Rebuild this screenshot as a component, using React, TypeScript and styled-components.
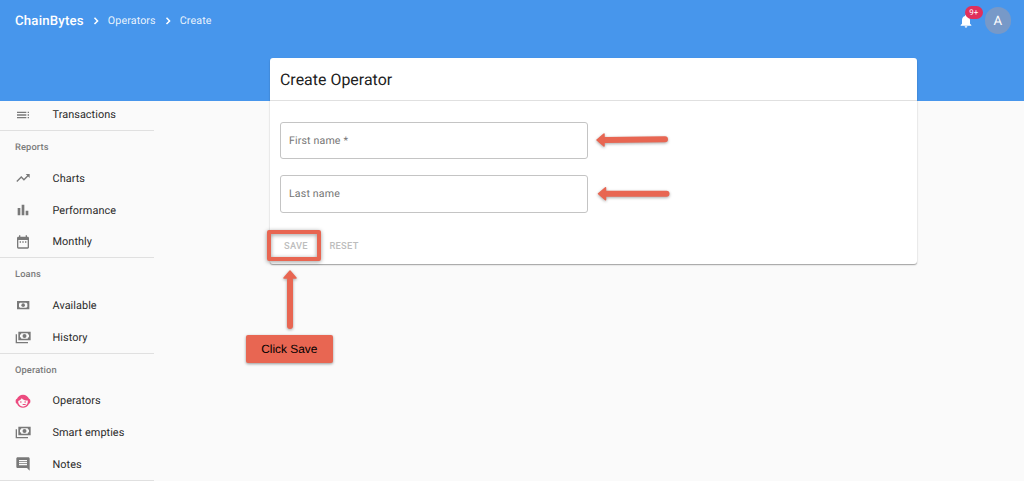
import React from "react";
import styled, { createGlobalStyle } from "styled-components";
import { MdToc, MdTrendingUp, MdBarChart, MdDateRange, MdComment, MdNotifications } from "react-icons/md";

const Global = createGlobalStyle`
  * { box-sizing: border-box; }
  body {
    margin: 0;
    background: #fafafa;
    font-family: Roboto, sans-serif;
    text-rendering: geometricPrecision;
    overflow: hidden;
  }
`;

const Page = styled.div`
  position: relative;
  height: 481px;
  display: grid;
  grid-template-rows: 58px 423px;
  background: linear-gradient(#4796ec 100.6px, #fafafa 100.6px);
`;

const Header = styled.header`
  height: 41px;
  display: flex;
  align-items: center;
  padding: 0 13px 0 15px;
  color: #fff;
`;

const Crumb = styled.span<{ $brand?: boolean }>`
  font-size: ${p => (p.$brand ? 13.2 : 10.7)}px;
  font-weight: ${p => (p.$brand ? 500 : 400)};
  letter-spacing: ${p => (p.$brand ? 0.2 : 0.12)}px;
  line-height: 16px;
  padding-top: ${p => (p.$brand ? 2.5 : 1)}px;
  color: ${p => (p.$brand ? "#fff" : "rgba(255,255,255,.9)")};
`;

const Separator = styled.svg`
  width: 16px;
  height: 16px;
  margin: 1px 4px 0;
  fill: none;
  stroke: #fff;
  stroke-width: 1.5;
`;

const Bell = styled.div`
  position: relative;
  display: flex;
  margin-left: auto;
  margin-right: 11px;
  svg { width: 16px; height: 16px; }
`;

const Badge = styled.span`
  position: absolute;
  left: 7.5px;
  top: -7px;
  width: 17.5px;
  height: 13.5px;
  border-radius: 7px;
  background: #e1305b;
  font-size: 8px;
  line-height: 13.5px;
  text-align: center;
`;

const Avatar = styled.div`
  width: 26.5px;
  height: 26.5px;
  border-radius: 50%;
  background: #7799c8;
  font-size: 13.2px;
  line-height: 29px;
  text-align: center;
`;

const Body = styled.div`
  display: flex;
  align-items: flex-start;
`;

const Sidebar = styled.nav`
  width: 154px;
  margin-top: 40.4px;
  margin-right: 115.5px;
`;

const Group = styled.section`
  border-bottom: 1px solid #e0e0e0;
  margin-bottom: -0.8px;
`;

const GroupTitle = styled.div`
  height: 31.8px;
  padding-left: 15px;
  font-size: 9.3px;
  font-weight: 500;
  letter-spacing: 0.12px;
  line-height: 35px;
  color: #7c7c7c;
`;

const NavItem = styled.div<{ $active?: boolean }>`
  height: 31.7px;
  display: flex;
  align-items: center;
  padding: 0.8px 0 0 15px;
  gap: 21.5px;
  font-size: 10.9px;
  letter-spacing: 0.05px;
  color: #2b2b2b;
  svg { width: 16px; height: 16px; color: ${p => (p.$active ? "#ec4b7f" : "#797979")}; }
`;

const Card = styled.main`
  width: 647.5px;
  height: 206px;
  border-radius: 3px;
  background: #fff;
  box-shadow: 0 1px 1px rgba(0,0,0,.25), 0 1px 2px rgba(0,0,0,.15);
`;

const CardTitle = styled.h1`
  margin: 0;
  height: 43px;
  padding-left: 10.5px;
  border-bottom: 1px solid #e0e0e0;
  font-size: 15.9px;
  font-weight: 400;
  letter-spacing: 0.03px;
  line-height: 43px;
  color: #212121;
`;

const Form = styled.form`
  padding: 21px 10.5px 0;
  display: flex;
  flex-direction: column;
  gap: 16.1px;
`;

const Field = styled.label`
  width: 308px;
  height: 37.3px;
  border: 1px solid #c4c4c4;
  border-radius: 3px;
  padding-left: 8px;
  font-size: 10.6px;
  letter-spacing: 0.15px;
  line-height: 35px;
  color: #757575;
`;

const Actions = styled.div`
  display: flex;
  gap: 21.5px;
  padding-left: 4px;
  margin-top: 8px;
`;

const TextButton = styled.button`
  border: 0;
  padding: 0;
  background: none;
  font: 500 9.3px/18px Roboto, sans-serif;
  letter-spacing: 0.3px;
  color: #bdbdbd;
`;

const Highlight = styled.div`
  position: absolute;
  left: 267px;
  top: 230px;
  width: 54.4px;
  height: 31px;
  border: 4px solid #e86652;
  border-radius: 2px;
  filter: drop-shadow(0 1px 2px rgba(0,0,0,.4));
`;

const Callout = styled.div`
  position: absolute;
  left: 246px;
  top: 335px;
  width: 86.5px;
  height: 28px;
  border-radius: 2px;
  background: #e86652;
  box-shadow: 0 1px 3px rgba(0,0,0,.4);
  font: 11.9px/28px "Liberation Sans", Arial, sans-serif;
  text-align: center;
  color: #000;
`;

const Arrows = styled.svg`
  position: absolute;
  left: 0;
  top: 0;
  pointer-events: none;
  filter: drop-shadow(0 1.5px 1.5px rgba(0,0,0,.35));
`;

const Chevron = () => (
  <Separator viewBox="0 0 16 16">
    <path d="M6.500 4.700 9.600 7.900 6.500 11.100" />
  </Separator>
);

const CashIcon = () => (
  <svg viewBox="0 0 24 24" fill="currentColor">
    <path fillRule="evenodd" d="M3 6h18.500v12.500H3zM7.500 8.500 6 10v4.500L7.500 16h9.500l1.500-1.500V10L17 8.500z" />
    <circle cx="12.250" cy="12.250" r="2.700" />
  </svg>
);

const CashStackIcon = () => (
  <svg viewBox="0 0 24 24" fill="currentColor">
    <path fillRule="evenodd" d="M5 4h18.500v13H5zM9.500 6.500a2 2 0 0 1-2 2v4a2 2 0 0 1 2 2H19a2 2 0 0 1 2-2v-4a2 2 0 0 1-2-2z" />
    <circle cx="14.250" cy="10.500" r="3" />
    <path d="M1 8h2v11.500h16.500v2H1z" />
  </svg>
);

const AgentIcon = () => (
  <svg viewBox="0 0 24 24" fill="currentColor">
    <path fillRule="evenodd" d="M12 2.500C16.200 2.500 19.700 5 21 8.800C22.300 9.200 23 10.200 23 11.500V13.500C23 14.800 22.300 15.700 21 16.100C19.500 19.800 16 22.300 12 22.300S4.500 19.800 3 16.100C1.700 15.700 1 14.800 1 13.500V11.500C1 10.200 1.700 9.200 3 8.800C4.300 5 7.800 2.500 12 2.500ZM4.800 12.800C4.800 17 8 20.300 12 20.300S19.200 17 19.200 12.800V11.300C15.500 11.500 12.200 10.300 10 7.800C8.700 9.700 7 11.200 4.800 12Z" />
    <circle cx="8.800" cy="13.500" r="1.200" />
    <circle cx="15.200" cy="13.500" r="1.200" />
    <path d="M11.500 16.500H16V18H11.500z" />
  </svg>
);

export default function App() {
  return (
    <>
      <Global />
      <Page>
        <Header>
          <Crumb $brand>ChainBytes</Crumb>
          <Chevron />
          <Crumb>Operators</Crumb>
          <Chevron />
          <Crumb>Create</Crumb>
          <Bell>
            <MdNotifications />
            <Badge>9+</Badge>
          </Bell>
          <Avatar>A</Avatar>
        </Header>
        <Body>
          <Sidebar>
            <Group>
              <NavItem><MdToc />Transactions</NavItem>
            </Group>
            <Group>
              <GroupTitle>Reports</GroupTitle>
              <NavItem><MdTrendingUp />Charts</NavItem>
              <NavItem><MdBarChart />Performance</NavItem>
              <NavItem><MdDateRange />Monthly</NavItem>
            </Group>
            <Group>
              <GroupTitle>Loans</GroupTitle>
              <NavItem><CashIcon />Available</NavItem>
              <NavItem><CashStackIcon />History</NavItem>
            </Group>
            <Group>
              <GroupTitle>Operation</GroupTitle>
              <NavItem $active><AgentIcon />Operators</NavItem>
              <NavItem><CashStackIcon />Smart empties</NavItem>
              <NavItem><MdComment />Notes</NavItem>
            </Group>
          </Sidebar>
          <Card>
            <CardTitle>Create Operator</CardTitle>
            <Form>
              <Field>First name *</Field>
              <Field>Last name</Field>
              <Actions>
                <TextButton type="button" disabled>SAVE</TextButton>
                <TextButton type="button" disabled>RESET</TextButton>
              </Actions>
            </Form>
          </Card>
        </Body>
        <Highlight />
        <Callout>Click Save</Callout>
        <Arrows width="1024" height="481" fill="#e86652" stroke="#e86652" strokeLinejoin="round" strokeLinecap="round">
          <path d="M605 140 665 139.200" strokeWidth="6" />
          <path d="M597 140 604 134 604 146z" strokeWidth="1.500" />
          <path d="M606 193.700H666.500" strokeWidth="6" />
          <path d="M598.500 193.700 605.500 187.700 605.500 199.700z" strokeWidth="1.500" />
          <path d="M290 280V326" strokeWidth="6" />
          <path d="M290 271 284 278H296z" strokeWidth="1.500" />
        </Arrows>
      </Page>
    </>
  );
}
